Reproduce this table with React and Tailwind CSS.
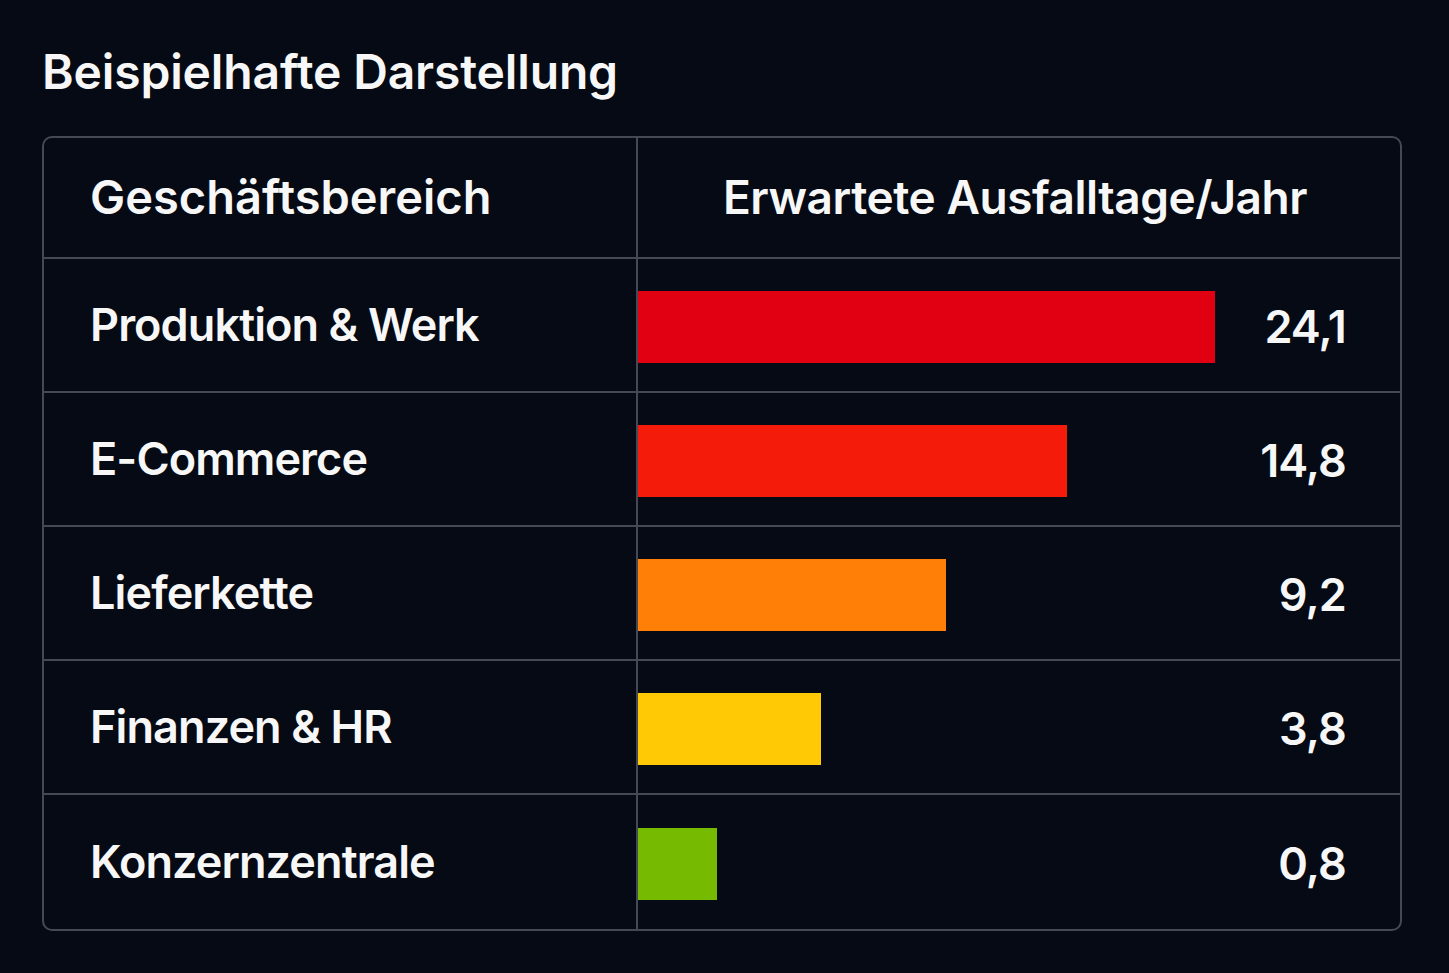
import React from "react"

const rows = [
  { name: "Produktion & Werk", value: "24,1", width: 577, color: "bg-[#e00012]" },
  { name: "E-Commerce", value: "14,8", width: 429, color: "bg-[#f41b0b]" },
  { name: "Lieferkette", value: "9,2", width: 308, color: "bg-[#ff7f07]" },
  { name: "Finanzen & HR", value: "3,8", width: 183, color: "bg-[#ffc905]" },
  { name: "Konzernzentrale", value: "0,8", width: 79, color: "bg-[#76bb02]" },
]

export default function App() {
  return (
    <div
      className="min-h-screen w-full bg-[#050a14] text-[#f7f7f7] pl-[42px] pr-[47px] pt-[40px]"
      style={{ fontFamily: "Inter, 'Noto Sans', sans-serif" }}
    >
      {/* Titel */}
      <h1 className="text-[48px] leading-[64px] font-semibold tracking-[-0.003em] h-[96px]">
        Beispielhafte Darstellung
      </h1>

      {/* Tabelle */}
      <div className="border-2 border-[#434a56] rounded-[10px] overflow-hidden">
        <div className="grid grid-cols-[594px_1fr] h-[121px] border-b-2 border-[#434a56]">
          <div className="flex items-center pl-[46px] text-[47px] font-semibold tracking-[0em] border-r-2 border-[#434a56]">
            Geschäftsbereich
          </div>
          <div className="flex items-center justify-center pr-[8px] text-[46px] font-semibold tracking-[-0.01em]">
            Erwartete Ausfalltage/Jahr
          </div>
        </div>

        {rows.map((row, i) => (
          <div
            key={row.name}
            className={`grid grid-cols-[594px_1fr] h-[134px] ${i < rows.length - 1 ? "border-b-2 border-[#434a56]" : ""}`}
          >
            <div className="flex items-center pl-[46px] text-[45px] font-semibold tracking-[-0.02em] border-r-2 border-[#434a56]">
              {row.name}
            </div>
            <div className="flex items-center justify-between pr-[54px] pt-[3px]">
              <div className={`h-[72px] ${row.color}`} style={{ width: row.width }} />
              <span className="text-[45px] font-semibold tracking-[-0.02em]">{row.value}</span>
            </div>
          </div>
        ))}
      </div>
    </div>
  )
}
